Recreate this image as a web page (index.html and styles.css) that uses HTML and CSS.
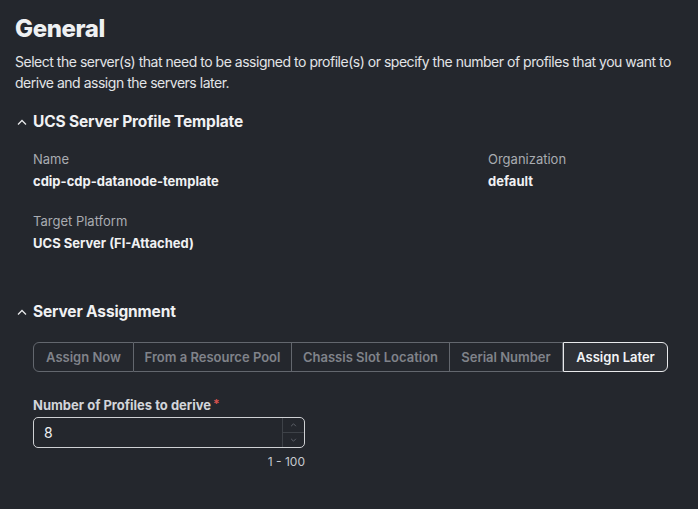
FILE: index.html
```html
<!DOCTYPE html>
<html>
<head>
<meta charset="utf-8">
<link rel="stylesheet" href="styles.css">
</head>
<body>
<div class="page">
  <h1 class="title">General</h1>
  <p class="desc">Select the server(s) that need to be assigned to profile(s) or specify the number of profiles that you want to derive and assign the servers later.</p>

  <section class="section">
    <h2 class="sec-head"><svg class="chev" viewBox="0 0 10 6" width="10" height="6"><path d="M1 5.5 L5 1.5 L9 5.5" fill="none" stroke="#e8e9eb" stroke-width="1.3"/></svg>UCS Server Profile Template</h2>
    <div class="grid">
      <div class="field">
        <div class="label">Name</div>
        <div class="value">cdip-cdp-datanode-template</div>
      </div>
      <div class="field">
        <div class="label">Organization</div>
        <div class="value">default</div>
      </div>
      <div class="field">
        <div class="label">Target Platform</div>
        <div class="value">UCS Server (FI-Attached)</div>
      </div>
    </div>
  </section>

  <section class="section sa">
    <h2 class="sec-head"><svg class="chev" viewBox="0 0 10 6" width="10" height="6"><path d="M1 5.5 L5 1.5 L9 5.5" fill="none" stroke="#e8e9eb" stroke-width="1.3"/></svg>Server Assignment</h2>
    <div class="body">
      <div class="segs">
        <div class="seg s1">Assign Now</div>
        <div class="seg s2">From a Resource Pool</div>
        <div class="seg s3">Chassis Slot Location</div>
        <div class="seg s4">Serial Number</div>
        <div class="seg s5 active">Assign Later</div>
      </div>
      <div class="num">
        <div class="num-label">Number of Profiles to derive<span class="req">*</span></div>
        <div class="input">
          <span class="val">8</span>
          <div class="spin">
            <div class="sp"><svg viewBox="0 0 8 5" width="7" height="4"><path d="M1 4 L4 1 L7 4" fill="none" stroke="#6c7078" stroke-width="1"/></svg></div>
            <div class="sp sp2"><svg viewBox="0 0 8 5" width="7" height="4"><path d="M1 1 L4 4 L7 1" fill="none" stroke="#6c7078" stroke-width="1"/></svg></div>
          </div>
        </div>
        <div class="hint">1 - 100</div>
      </div>
    </div>
  </section>
</div>
</body>
</html>
```
FILE: styles.css
```css
* { box-sizing: border-box; }
html, body { margin: 0; padding: 0; }
body {
  background: #24272d;
  font-family: Inter, "Noto Sans", sans-serif;
  color: #e6e7e9;
  width: 698px;
  height: 509px;
  overflow: hidden;
}
.page { padding: 14px 15px 0 15px; }
.title {
  margin: 0;
  font-size: 24px;
  font-weight: 800;
  line-height: 30px;
  color: #eef0f2;
  letter-spacing: -0.4px;
}
.desc {
  margin: 7px 0 0 0;
  font-size: 14px;
  line-height: 21px;
  color: #e2e4e7;
  letter-spacing: -0.48px;
}
.section { margin-top: 18px; }
.sec-head {
  margin: 0;
  display: flex;
  align-items: center;
  font-size: 15.5px;
  font-weight: 700;
  line-height: 22px;
  color: #f0f1f3;
  letter-spacing: -0.15px;
}
.chev { margin: 0 6px 0 2px; }
.grid {
  display: grid;
  grid-template-columns: 455px 1fr;
  row-gap: 22px;
  padding: 17px 0 0 18px;
}
.label {
  font-size: 13px;
  line-height: 18px;
  color: #a9acb1;
}
.value {
  margin-top: 4px;
  font-size: 13px;
  font-weight: 700;
  line-height: 18px;
  color: #f0f1f3;
}
.sa { margin-top: 49px; }
.body { padding: 19px 0 0 18px; }
.segs {
  display: flex;
  width: 635px;
  height: 30px;
}
.seg {
  border: 1.5px solid #63676e;
  border-left-width: 0;
  font-size: 13px;
  font-weight: 600;
  color: #80838a;
  display: flex;
  align-items: center;
  justify-content: center;
  background: #24272d;
}
.s1 { width: 101px; border-left-width: 1.5px; border-radius: 6px 0 0 6px; }
.s2 { width: 158px; }
.s3 { width: 158px; }
.s4 { width: 113px; }
.s5 { flex: 1; }
.seg.active {
  border: 1.5px solid #e9eaec;
  border-radius: 0 6px 6px 0;
  background: #2e3137;
  color: #f3f4f6;
}
.num { margin-top: 23px; width: 272px; }
.num-label {
  font-size: 13px;
  font-weight: 700;
  line-height: 18px;
  color: #d2d5da;
}
.req { color: #d9534f; margin-left: 2px; font-size: 12px; vertical-align: 2px; }
.input {
  margin-top: 3px;
  height: 31px;
  border: 1.5px solid #cfd1d4;
  border-radius: 5px;
  display: flex;
  align-items: center;
  background: #24272d;
}
.val {
  flex: 1;
  padding-left: 10px;
  font-size: 14px;
  color: #f0f1f3;
}
.spin {
  width: 22px;
  height: 100%;
  border-left: 1px solid #3e4248;
  display: flex;
  flex-direction: column;
}
.sp { flex: 1; display: flex; align-items: center; justify-content: center; }
.sp2 { border-top: 1px solid #3e4248; }
.hint {
  text-align: right;
  margin-top: 6px;
  font-size: 12px;
  line-height: 16px;
  color: #c6c9ce;
}
```
